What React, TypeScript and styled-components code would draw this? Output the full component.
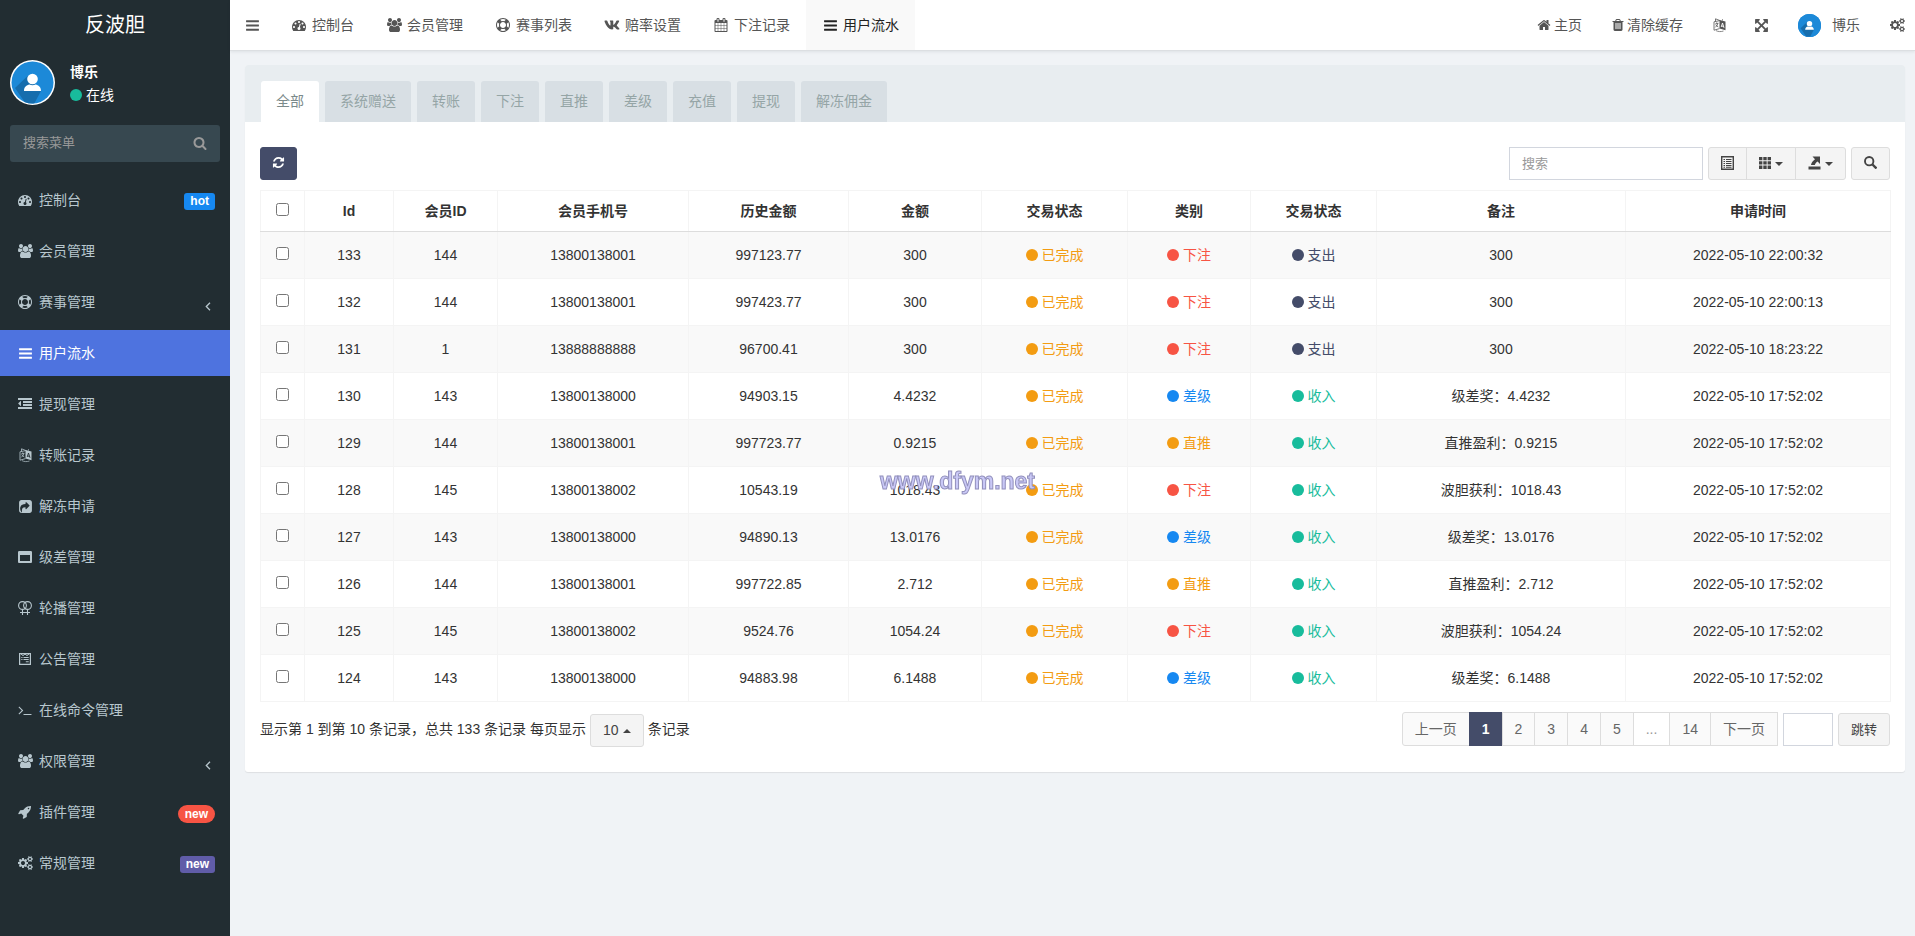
import React from "react";
import styled, { createGlobalStyle, css } from "styled-components";
import { FaVk } from "react-icons/fa";

const Global = createGlobalStyle`
  *, *::before, *::after { box-sizing: border-box; }
  body {
    margin: 0;
    background: #f0f3f6;
    color: #333;
    font: 14px/20px "Liberation Sans", "Noto Sans CJK SC", sans-serif;
  }
  button, input { font-family: inherit; }
  a { color: inherit; text-decoration: none; }
  ul { margin: 0; padding: 0; list-style: none; }
`;

/* ---------- icons ---------- */

const cogSmall =
  "v140q0 16-149 31-12 27-30 52 51 113 51 138 0 4-4 7-122 71-124 71-8 0-46-47t-52-68q-20 2-30 2t-30-2q-14 21-52 68t-46 47q-2 0-124-71-4-3-4-7 0-25 51-138-18-25-30-52-149-15-149-31v-140q0-16 149-31 13-29 30-52-51-113-51-138 0-4 4-7 4-2 35-20t59-34 30-16q8 0 46 46.5t52 67.5q20-2 30-2t30 2q51-71 92-112l6-2q4 0 124 70 4 3 4 7 0 25-51 138 17 23 30 52 149 15 149 31z";
const bar = "v128q0 26-19 45t-45 19h-1408q-26 0-45-19t-19-45v-128q0-26 19-45t45-19h1408q26 0 45 19t19 45z";
const longBar = "v192q0 13-9.5 22.5t-22.5 9.5h-1728q-13 0-22.5-9.5t-9.5-22.5v-192q0-13 9.5-22.5t22.5-9.5h1728q13 0 22.5 9.5t9.5 22.5z";
const shortBar = "v192q0 13-9.5 22.5t-22.5 9.5h-1088q-13 0-22.5-9.5t-9.5-22.5v-192q0-13 9.5-22.5t22.5-9.5h1088q13 0 22.5 9.5t9.5 22.5z";

const glyphs = {
  dashboard:
    "M384 1152q0-53-37.5-90.5t-90.5-37.5-90.5 37.5-37.5 90.5 37.5 90.5 90.5 37.5 90.5-37.5 37.5-90.5zm192-448q0-53-37.5-90.5t-90.5-37.5-90.5 37.5-37.5 90.5 37.5 90.5 90.5 37.5 90.5-37.5 37.5-90.5zm428 481l101-382q6-26-7.5-48.5t-38.5-29.5-48 6.5-30 39.5l-101 382q-60 5-107 43.5t-63 98.5q-20 77 20 146t117 89 146-20 89-117q16-60-6-117t-72-91zm660-33q0-53-37.5-90.5t-90.5-37.5-90.5 37.5-37.5 90.5 37.5 90.5 90.5 37.5 90.5-37.5 37.5-90.5zm-640-640q0-53-37.5-90.5t-90.5-37.5-90.5 37.5-37.5 90.5 37.5 90.5 90.5 37.5 90.5-37.5 37.5-90.5zm448 192q0-53-37.5-90.5t-90.5-37.5-90.5 37.5-37.5 90.5 37.5 90.5 90.5 37.5 90.5-37.5 37.5-90.5zm320 448q0 261-141 483-19 29-54 29h-1402q-35 0-54-29-141-221-141-483 0-182 71-348t191-286 286-191 348-71 348 71 286 191 191 286 71 348z",
  users:
    "M529 896q-162 5-265 128h-134q-82 0-138-40.5t-56-118.5q0-353 124-353 6 0 43.5 21t97.5 42.5 119 21.5q67 0 133-23-5 37-5 66 0 139 81 256zm1071 637q0 120-73 189.5t-194 69.5h-874q-121 0-194-69.5t-73-189.5q0-53 3.5-103.5t14-109 26.5-108.5 43-97.5 62-81 85.5-53.5 111.5-20q10 0 43 21.5t73 48 107 48 135 21.5 135-21.5 107-48 73-48 43-21.5q61 0 111.5 20t85.5 53.5 62 81 43 97.5 26.5 108.5 14 109 3.5 103.5zm-1024-1277q0 106-75 181t-181 75-181-75-75-181 75-181 181-75 181 75 75 181zm704 384q0 159-112.5 271.5t-271.5 112.5-271.5-112.5-112.5-271.5 112.5-271.5 271.5-112.5 271.5 112.5 112.5 271.5zm576 225q0 78-56 118.5t-138 40.5h-134q-103-123-265-128 81-117 81-256 0-29-5-66 66 23 133 23 59 0 119-21.5t97.5-42.5 43.5-21q124 0 124 353zm-128-609q0 106-75 181t-181 75-181-75-75-181 75-181 181-75 181 75 75 181z",
  ring:
    "M896 0q182 0 348 71t286 191 191 286 71 348-71 348-191 286-286 191-348 71-348-71-286-191-191-286-71-348 71-348 191-286 286-191 348-71zm0 128q-190 0-361 90l194 194q82-28 167-28t167 28l194-194q-171-90-361-90zm-678 1129l194-194q-28-82-28-167t28-167l-194-194q-90 171-90 361t90 361zm678 407q190 0 361-90l-194-194q-82 28-167 28t-167-28l-194 194q171 90 361 90zm0-384q159 0 271.5-112.5t112.5-271.5-112.5-271.5-271.5-112.5-271.5 112.5-112.5 271.5 112.5 271.5 271.5 112.5zm484-217l194 194q90-171 90-361t-90-361l-194 194q28 82 28 167t-28 167z",
  bars: `M1664 1344${bar}M1664 832${bar}M1664 320${bar}`,
  calendar:
    "M192 1664h288v-288h-288v288zm352 0h320v-288h-320v288zm-352-352h288v-320h-288v320zm352 0h320v-320h-320v320zm-352-384h288v-288h-288v288zm736 736h320v-288h-320v288zm-384-736h320v-288h-320v288zm768 736h288v-288h-288v288zm-384-352h320v-320h-320v320zm-352-864v-288q0-13-9.5-22.5t-22.5-9.5h-64q-13 0-22.5 9.5t-9.5 22.5v288q0 13 9.5 22.5t22.5 9.5h64q13 0 22.5-9.5t9.5-22.5zm736 864h288v-320h-288v320zm-384-384h320v-288h-320v288zm384 0h288v-288h-288v288zm32-480v-288q0-13-9.5-22.5t-22.5-9.5h-64q-13 0-22.5 9.5t-9.5 22.5v288q0 13 9.5 22.5t22.5 9.5h64q13 0 22.5-9.5t9.5-22.5zm384-64v1280q0 52-38 90t-90 38h-1408q-52 0-90-38t-38-90v-1280q0-52 38-90t90-38h128v-96q0-66 47-113t113-47h64q66 0 113 47t47 113v96h384v-96q0-66 47-113t113-47h64q66 0 113 47t47 113v96h128q52 0 90 38t38 90z",
  search:
    "M1216 832q0-185-131.5-316.5t-316.5-131.5-316.5 131.5-131.5 316.5 131.5 316.5 316.5 131.5 316.5-131.5 131.5-316.5zm512 832q0 52-38 90t-90 38q-54 0-90-38l-343-342q-179 124-399 124-143 0-273.5-55.5t-225-150-150-225-55.5-273.5 55.5-273.5 150-225 225-150 273.5-55.5 273.5 55.5 225 150 150 225 55.5 273.5q0 220-124 399l343 343q37 37 37 90z",
  home:
    "M1472 992v480q0 26-19 45t-45 19h-384v-384h-256v384h-384q-26 0-45-19t-19-45v-480q0-1 .5-3t.5-3l575-474 575 474q1 2 1 6zm223-69l-62 74q-8 9-21 11h-3q-13 0-21-7l-692-577-692 577q-12 8-24 7-13-2-21-11l-62-74q-8-10-7-23.5t11-21.5l719-599q32-26 76-26t76 26l244 204v-195q0-14 9-23t23-9h192q14 0 23 9t9 23v408l219 182q10 8 11 21.5t-7 23.5z",
  trash:
    "M704 1376v-704q0-14-9-23t-23-9h-64q-14 0-23 9t-9 23v704q0 14 9 23t23 9h64q14 0 23-9t9-23zm256 0v-704q0-14-9-23t-23-9h-64q-14 0-23 9t-9 23v704q0 14 9 23t23 9h64q14 0 23-9t9-23zm256 0v-704q0-14-9-23t-23-9h-64q-14 0-23 9t-9 23v704q0 14 9 23t23 9h64q14 0 23-9t9-23zm-544-992h448l-48-117q-7-9-17-11h-317q-10 2-17 11zm928 32v64q0 14-9 23t-23 9h-96v948q0 83-47 143.5t-113 60.5h-832q-66 0-113-58.5t-47-141.5v-952h-96q-14 0-23-9t-9-23v-64q0-14 9-23t23-9h309l70-167q15-37 54-63t79-26h320q40 0 79 26t54 63l70 167h309q14 0 23 9t9 23z",
  cogs: `M896 896q0-106-75-181t-181-75-181 75-75 181 75 181 181 75 181-75 75-181zm768 512q0-52-38-90t-90-38-90 38-38 90q0 53 37.5 90.5t90.5 37.5 90.5-37.5 37.5-90.5zm0-1024q0-52-38-90t-90-38-90 38-38 90q0 53 37.5 90.5t90.5 37.5 90.5-37.5 37.5-90.5zm-384 421v185q0 10-7 19.5t-16 10.5l-155 24q-11 35-32 76 34 48 90 115 7 11 7 20 0 12-7 19-23 30-82.5 89.5t-78.5 59.5q-11 0-21-7l-115-90q-37 19-77 31-11 108-23 155-7 24-30 24h-186q-11 0-20-7.5t-10-17.5l-23-153q-34-10-75-31l-118 89q-7 7-20 7-11 0-21-8-144-133-144-160 0-9 7-19 10-14 41-53t47-61q-23-44-35-82l-152-24q-10-1-17-9.5t-7-19.5v-185q0-10 7-19.5t16-10.5l155-24q11-35 32-76-34-48-90-115-7-11-7-20 0-12 7-20 22-30 82-89t79-59q11 0 21 7l115 90q34-18 77-32 11-108 23-154 7-24 30-24h186q11 0 20 7.5t10 17.5l23 153q34 10 75 31l118-89q8-7 20-7 11 0 21 8 144 133 144 160 0 8-7 19-12 16-42 54t-45 60q23 48 34 82l152 23q10 2 17 10.5t7 19.5zM1920 1338${cogSmall}M1920 314${cogSmall}`,
  refresh:
    "M1639 1056q0 5-1 7-64 268-268 434.5t-478 166.5q-146 0-282.5-55t-243.5-157l-129 129q-19 19-45 19t-45-19-19-45v-448q0-26 19-45t45-19h448q26 0 45 19t19 45-19 45l-137 137q71 66 161 102t187 36q134 0 250-65t186-179q11-17 53-117 8-23 30-23h192q13 0 22.5 9.5t9.5 22.5zm25-800v448q0 26-19 45t-45 19h-448q-26 0-45-19t-19-45 19-45l138-138q-148-137-349-137-134 0-250 65t-186 179q-11 17-53 117-8 23-30 23h-199q-13 0-22.5-9.5t-9.5-22.5v-7q65-268 270-434.5t480-166.5q146 0 284 55.5t245 156.5l130-129q19-19 45-19t45 19 19 45z",
  rocket:
    "M1440 448q0-40-28-68t-68-28-68 28-28 68 28 68 68 28 68-28 28-68zm224-288q0 249-75.5 430.5t-253.5 360.5q-81 80-195 176l-20 379q-2 16-16 26l-384 224q-7 4-16 4-12 0-23-9l-64-64q-13-14-8-32l85-276-281-281-276 85q-3 1-9 1-14 0-23-9l-64-64q-17-19-5-39l224-384q10-14 26-16l379-20q96-114 176-195 188-187 358-258t431-71q14 0 24 9.5t10 22.5z",
  outdent: `M384 544v576q0 13-9.5 22.5t-22.5 9.5q-14 0-23-9l-288-288q-9-9-9-23t9-23l288-288q9-9 23-9 13 0 22.5 9.5t9.5 22.5zM1792 1312${longBar}M1792 928${shortBar}M1792 544${shortBar}M1792 160${longBar}`,
  share:
    "M1005 1197l352-352q19-19 19-45t-19-45l-352-352q-30-31-69-14-40 17-40 59v160q-119 0-216 19.5t-162.5 51-114 79-76.5 95.5-44.5 109-21.5 111.5-5 110.5q0 181 167 404 11 12 25 12 7 0 13-3 22-9 19-33-44-354 62-473 46-52 130-75.5t224-23.5v160q0 42 40 59 12 5 24 5 26 0 45-19zm659-781v960q0 119-84.5 203.5t-203.5 84.5h-960q-119 0-203.5-84.5t-84.5-203.5v-960q0-119 84.5-203.5t203.5-84.5h960q119 0 203.5 84.5t84.5 203.5z",
  window:
    "M256 1408h1280v-768h-1280v768zM1792 288v1216q0 66-47 113t-113 47h-1472q-66 0-113-47t-47-113v-1216q0-66 47-113t113-47h1472q66 0 113 47t47 113z",
  terminal:
    "M649 983l-466 466q-10 10-23 10t-23-10l-50-50q-10-10-10-23t10-23l393-393-393-393q-10-10-10-23t10-23l50-50q10-10 23-10t23 10l466 466q10 10 10 23t-10 23zm1079 457v64q0 14-9 23t-23 9h-960q-14 0-23-9t-9-23v-64q0-14 9-23t23-9h960q14 0 23 9t9 23z",
  expand:
    "M1411 541l-355 355 355 355 144-144q29-31 70-14 39 17 39 59v448q0 26-19 45t-45 19h-448q-42 0-59-40-17-39 14-69l144-144-355-355-355 355 144 144q31 30 14 69-17 40-59 40h-448q-26 0-45-19t-19-45v-448q0-42 40-59 39-17 69 14l144 144 355-355-355-355-144 144q-19 19-45 19-12 0-24-5-40-17-40-59v-448q0-26 19-45t45-19h448q42 0 59 40 17 39-14 69l-144 144 355 355 355-355-144-144q-31-30-14-69 17-40 59-40h448q26 0 45 19t19 45v448q0 42-39 59-13 5-25 5-26 0-45-19z",
};

const IconBox = styled.span<{ $w?: number }>`
  display: inline-flex;
  flex: none;
  align-items: center;
  justify-content: center;
  width: ${(p) => p.$w ?? 18}px;
  height: 14px;
  svg { display: block; flex: none; overflow: visible; }
`;

type GlyphName = keyof typeof glyphs;
const wide: Partial<Record<GlyphName, string>> = {
  users: "-64 0 1920 1792",
  cogs: "0 0 1920 1792",
};

function Glyph({ name, size = 14 }: { name: GlyphName; size?: number }) {
  const w = wide[name] ? size + 1 : size;
  return (
    <svg width={w} height={size} viewBox={wide[name] ?? "0 0 1792 1792"} fill="currentColor" fillRule={name === "window" ? "evenodd" : "nonzero"} aria-hidden="true">
      <path d={glyphs[name]} />
    </svg>
  );
}

function LanguageIcon() {
  return (
    <svg width="13" height="14" viewBox="0 0 13 14" fill="none" stroke="currentColor" aria-hidden="true">
      <path d="M6.500 2.700 1 3.800v8.400l5.500-1.600M2.500 3.400V.8l5 2" strokeWidth=".8" />
      <path d="M2.200 6l3.200-.8M3.700 4.400v1.200M4.900 5.400C4.400 7.200 3.500 8.500 2.200 9.400M2.800 6.800c.6 1 1.400 1.700 2.500 2.100" strokeWidth=".8" />
      <path d="M6.500 2 12.500 3.600v8.600l-6-1.700z" fill="currentColor" stroke="none" />
      <path d="M8.200 9 9.500 5l1.500 4.800M8.700 8l1.900.4" stroke="var(--icon-gap)" strokeWidth=".9" />
      <path d="M3 12.600c2 1.200 5 1.300 7.500.4M9.500 1.200v1.400" strokeWidth=".7" />
    </svg>
  );
}

function VenusIcon() {
  return (
    <svg width="14" height="14" viewBox="0 0 14 14" fill="none" stroke="currentColor" strokeWidth="1.100" aria-hidden="true">
      <circle cx="4.500" cy="4.500" r="3.900" />
      <circle cx="9.500" cy="4.500" r="3.900" />
      <path d="M4.500 8.400V14M9.500 8.400V14M2 11.500h10" />
    </svg>
  );
}

function NoticeIcon() {
  return (
    <svg width="12" height="12" viewBox="0 0 12 12" fill="none" stroke="currentColor" aria-hidden="true">
      <path d="M.6.6h10.800v10.800H.6z" strokeWidth="1.200" />
      <path d="M2 1l2 1.600L6 1l2 1.600L10 1" />
      <path d="M2.300 4.500h1.200M4.500 4.500h5.200M2.300 6.500h1.200M4.500 6.500h5.200M6.800 8.700h2.900" strokeWidth="1.100" />
    </svg>
  );
}

function Avatar({ size, ring }: { size: number; ring?: boolean }) {
  return (
    <svg width={size} height={size} viewBox="0 0 45 45" role="img" aria-label="博乐">
      <defs>
        <clipPath id={`disc${size}`}><circle cx="22.500" cy="22.500" r={ring ? 21 : 22.5} /></clipPath>
      </defs>
      <circle cx="22.500" cy="22.500" r="22.500" fill={ring ? "#fff" : "#1c89d8"} />
      <g clipPath={`url(#disc${size})`}>
        <rect width="45" height="45" fill="#1c89d8" />
        <path d="M17.500 16 5 28 16 44h8l7-13z" fill="#166dad" />
      </g>
      <circle cx="22.500" cy="19" r="5.300" fill="#fff" />
      <path d="M14 31c0-4 2.500-6 5.500-6.500 2 1 4 1 6 0 3 .5 5.500 2.500 5.500 6.500z" fill="#fff" />
    </svg>
  );
}

/* ---------- sidebar ---------- */

const Shell = styled.div`
  display: flex;
  min-height: 100vh;
`;
const Sidebar = styled.aside`
  --icon-gap: #222d32;
  flex: none;
  width: 230px;
  background: #222d32;
  color: #b8c7ce;
`;
const Brand = styled.a`
  display: block;
  height: 50px;
  line-height: 50px;
  text-align: center;
  font-size: 20px;
  color: #fff;
`;
const UserPanel = styled.div`
  display: flex;
  gap: 15px;
  padding: 10px;
  color: #fff;
`;
const UserInfo = styled.div`
  display: flex;
  flex-direction: column;
  gap: 3px;
  padding-top: 2px;
  strong { line-height: 20px; }
`;
const Dot = styled.i<{ $color?: string }>`
  flex: none;
  width: 12px;
  height: 12px;
  border-radius: 50%;
  background: ${(p) => p.$color ?? "currentColor"};
`;
const Online = styled.a`
  display: flex;
  align-items: center;
  gap: 4px;
`;
const MenuSearch = styled.form`
  display: flex;
  align-items: center;
  height: 37px;
  margin: 10px 10px 15px;
  padding-bottom: 2px;
  border-radius: 3px;
  background: #374850;
  input {
    flex: 1;
    min-width: 0;
    padding: 0 13px;
    border: 0;
    background: none;
    color: #fff;
    font-size: 13px;
    outline: none;
  }
  input::placeholder { color: #999; }
  button {
    display: flex;
    padding: 0 13px;
    border: 0;
    background: none;
    color: #999;
  }
`;
const Menu = styled.ul`
  display: flex;
  flex-direction: column;
  gap: 5px;
`;
const MenuLink = styled.a<{ $active?: boolean }>`
  display: flex;
  align-items: center;
  gap: 5px;
  height: 46px;
  padding: 0 15px 0 16px;
  ${(p) => p.$active && css`
    background: #4e73df;
    color: #fff;
  `}
`;
const Badge = styled.small<{ $color: string; $pill?: boolean }>`
  margin: ${(p) => (p.$pill ? 4 : 2)}px 0 0 auto;
  padding: 0 ${(p) => (p.$pill ? 7 : 6)}px;
  border-radius: ${(p) => (p.$pill ? 9 : 3)}px;
  background: ${(p) => p.$color};
  color: #fff;
  font-size: 12px;
  font-weight: bold;
  line-height: ${(p) => (p.$pill ? 18 : 17)}px;
`;
const Chevron = styled.svg`
  margin: 8px 4px 0 auto;
`;

/* ---------- top bar ---------- */

const Main = styled.div`
  flex: 1;
  min-width: 0;
`;
const TopBar = styled.header`
  --icon-gap: #fff;
  display: flex;
  justify-content: space-between;
  height: 51px;
  padding-right: 10px;
  border-bottom: 1px solid #dcdfe2;
  background: #fff;
  box-shadow: 0 1px 3px rgba(0, 21, 41, 0.08);
  color: #555;
`;
const NavGroup = styled.nav`
  display: flex;
`;
const Toggle = styled.button`
  display: flex;
  align-items: center;
  justify-content: center;
  width: 45px;
  padding: 0;
  border: 0;
  background: none;
  color: inherit;
`;
const NavTab = styled.a<{ $active?: boolean }>`
  display: flex;
  align-items: center;
  gap: 4px;
  padding: 0 16px 0 15px;
  line-height: 50px;
  ${(p) => p.$active && css`
    background: #f9f9f9;
    color: #222;
  `}
`;
const NavLink = styled.a<{ $gap?: number }>`
  display: flex;
  align-items: center;
  gap: ${(p) => p.$gap ?? 3}px;
  padding: 0 15px;
  &:last-child { padding-right: 0; }
`;

/* ---------- panel ---------- */

const Panel = styled.section`
  margin: 14px 10px 15px 15px;
  border-radius: 3px;
  background: #fff;
  box-shadow: 0 1px 1px rgba(0, 0, 0, 0.08);
`;
const Tabs = styled.nav`
  display: flex;
  gap: 6px;
  padding: 16px 16px 0;
  border-radius: 3px 3px 0 0;
  background: #e8edf0;
`;
const Tab = styled.a<{ $active?: boolean }>`
  height: 41px;
  padding: 0 15px;
  border-radius: 3px 3px 0 0;
  background: ${(p) => (p.$active ? "#fff" : "#d8dfe4")};
  color: ${(p) => (p.$active ? "#7b8a8b" : "#95a5a6")};
  line-height: 41px;
`;
const Body = styled.div`
  padding: 25px 15px;
`;
const Toolbar = styled.div`
  display: flex;
  justify-content: space-between;
  margin-bottom: 10px;
`;
const Tools = styled.div`
  display: flex;
  gap: 5px;
`;
const Button = styled.button`
  display: inline-flex;
  align-items: center;
  justify-content: center;
  gap: 4px;
  height: 33px;
  padding: 0 12px 2px;
  border: 1px solid #ddd;
  border-radius: 3px;
  background: #f4f4f4;
  color: #444;
  font-size: 13px;
`;
const Refresh = styled(Button)`
  padding: 0 11px 2px;
  border-color: #444c69;
  background: #444c69;
  color: #fff;
`;
const ButtonGroup = styled.div`
  display: flex;
  button { border-radius: 0; }
  button + button { margin-left: -1px; }
  button:first-child { border-radius: 3px 0 0 3px; }
  button:last-child { border-radius: 0 3px 3px 0; }
`;
const TextInput = styled.input<{ $w: number }>`
  width: ${(p) => p.$w}px;
  height: 33px;
  padding: 0 12px;
  border: 1px solid #d2d6de;
  background: #fff;
  font-size: 13px;
  outline: none;
  &::placeholder { color: #999; }
`;
const Caret = styled.i<{ $up?: boolean }>`
  margin-top: 3px;
  border: 4px solid transparent;
  ${(p) => (p.$up
    ? css`border-top: 0; border-bottom-color: currentColor;`
    : css`border-bottom: 0; border-top-color: currentColor;`)}
`;
const Table = styled.table`
  width: 100%;
  table-layout: fixed;
  border-collapse: collapse;
  text-align: center;
  th, td {
    padding: 0 8px;
    border: 1px solid #f4f4f4;
  }
  th {
    height: 41px;
    border-bottom: 1px solid #ddd;
  }
  td { height: 47px; }
  tbody tr:nth-child(odd) { background: #f9f9f9; }
  input {
    display: block;
    width: 13px;
    height: 13px;
    margin: 0 auto 3px;
  }
`;
const Status = styled.a<{ $color: string }>`
  display: inline-flex;
  align-items: center;
  gap: 4px;
  color: ${(p) => p.$color};
`;
const Footer = styled.footer`
  display: flex;
  align-items: flex-start;
  justify-content: space-between;
  padding-top: 10px;
`;
const Summary = styled.div`
  display: flex;
  align-items: flex-start;
  gap: 4px;
  padding-top: 2px;
  line-height: 30px;
  button { font-size: 14px; }
`;
const Pager = styled.div`
  display: flex;
  align-items: center;
  gap: 5px;
`;
const Pages = styled.ul`
  display: flex;
  li + li { margin-left: -1px; }
  li:first-child a { border-radius: 3px 0 0 3px; }
`;
const PageLink = styled.a<{ $active?: boolean; $muted?: boolean }>`
  display: block;
  height: 34px;
  padding: 0 12px;
  border: 1px solid ${(p) => (p.$active ? "#444c69" : "#ddd")};
  background: ${(p) => (p.$active ? "#444c69" : p.$muted ? "#fff" : "#fafafa")};
  color: ${(p) => (p.$active ? "#fff" : p.$muted ? "#999" : "#666")};
  font-weight: ${(p) => (p.$active ? "bold" : "normal")};
  line-height: 32px;
`;
const Watermark = styled.div`
  position: fixed;
  top: 50%;
  left: 50%;
  padding-top: 26px;
  transform: translate(-50%, -50%);
  pointer-events: none;
  color: #c9c8f6;
  font-size: 23px;
  font-weight: bold;
  line-height: 26px;
  -webkit-text-stroke: 1px #9391bd;
`;

/* ---------- data ---------- */

const menu: { icon: React.ReactNode; label: string; active?: boolean; sub?: boolean; badge?: [string, string, boolean?] }[] = [
  { icon: <Glyph name="dashboard" />, label: "控制台", badge: ["hot", "#1688f1"] },
  { icon: <Glyph name="users" />, label: "会员管理" },
  { icon: <Glyph name="ring" />, label: "赛事管理", sub: true },
  { icon: <Glyph name="bars" size={15} />, label: "用户流水", active: true },
  { icon: <Glyph name="outdent" />, label: "提现管理" },
  { icon: <LanguageIcon />, label: "转账记录" },
  { icon: <Glyph name="share" size={15} />, label: "解冻申请" },
  { icon: <Glyph name="window" />, label: "级差管理" },
  { icon: <VenusIcon />, label: "轮播管理" },
  { icon: <NoticeIcon />, label: "公告管理" },
  { icon: <Glyph name="terminal" />, label: "在线命令管理" },
  { icon: <Glyph name="users" />, label: "权限管理", sub: true },
  { icon: <Glyph name="rocket" />, label: "插件管理", badge: ["new", "#f75444", true] },
  { icon: <Glyph name="cogs" />, label: "常规管理", badge: ["new", "#605ca8"] },
];

const navTabs: [React.ReactNode, string][] = [
  [<Glyph name="dashboard" />, "控制台"],
  [<Glyph name="users" />, "会员管理"],
  [<Glyph name="ring" />, "赛事列表"],
  [<FaVk size={16} />, "赔率设置"],
  [<Glyph name="calendar" />, "下注记录"],
  [<Glyph name="bars" size={15} />, "用户流水"],
];

const tabs = ["全部", "系统赠送", "转账", "下注", "直推", "差级", "充值", "提现", "解冻佣金"];
const columns: [string, number][] = [
  ["Id", 89], ["会员ID", 104], ["会员手机号", 191], ["历史金额", 160], ["金额", 133],
  ["交易状态", 146], ["类别", 123], ["交易状态", 126], ["备注", 249], ["申请时间", 265],
];

const colors: Record<string, string> = {
  已完成: "#f39c12", 下注: "#f75444", 差级: "#1688f1", 直推: "#f39c12", 支出: "#444c69", 收入: "#18bc9c",
};

const rows = [
  ["133", "144", "13800138001", "997123.77", "300", "下注", "支出", "300", "22:00:32"],
  ["132", "144", "13800138001", "997423.77", "300", "下注", "支出", "300", "22:00:13"],
  ["131", "1", "13888888888", "96700.41", "300", "下注", "支出", "300", "18:23:22"],
  ["130", "143", "13800138000", "94903.15", "4.4232", "差级", "收入", "级差奖：4.4232", "17:52:02"],
  ["129", "144", "13800138001", "997723.77", "0.9215", "直推", "收入", "直推盈利：0.9215", "17:52:02"],
  ["128", "145", "13800138002", "10543.19", "1018.43", "下注", "收入", "波胆获利：1018.43", "17:52:02"],
  ["127", "143", "13800138000", "94890.13", "13.0176", "差级", "收入", "级差奖：13.0176", "17:52:02"],
  ["126", "144", "13800138001", "997722.85", "2.712", "直推", "收入", "直推盈利：2.712", "17:52:02"],
  ["125", "145", "13800138002", "9524.76", "1054.24", "下注", "收入", "波胆获利：1054.24", "17:52:02"],
  ["124", "143", "13800138000", "94883.98", "6.1488", "差级", "收入", "级差奖：6.1488", "17:52:02"],
];

const pages = ["上一页", "1", "2", "3", "4", "5", "...", "14", "下一页"];

function StatusLink({ label }: { label: string }) {
  return (
    <Status href="#" $color={colors[label]}>
      <Dot />
      {label}
    </Status>
  );
}

export default function App() {
  return (
    <>
      <Global />
      <Shell>
        <Sidebar>
          <Brand href="#">反波胆</Brand>
          <UserPanel>
            <Avatar size={45} ring />
            <UserInfo>
              <strong>博乐</strong>
              <Online href="#"><Dot $color="#18bc9c" />在线</Online>
            </UserInfo>
          </UserPanel>
          <MenuSearch>
            <input type="text" placeholder="搜索菜单" aria-label="搜索菜单" />
            <button type="button" aria-label="搜索"><Glyph name="search" /></button>
          </MenuSearch>
          <Menu>
            {menu.map((m) => (
              <li key={m.label}>
                <MenuLink href="#" $active={m.active}>
                  <IconBox>{m.icon}</IconBox>
                  {m.label}
                  {m.sub && (
                    <Chevron width="6" height="9" viewBox="0 0 6 9" fill="none" stroke="currentColor" strokeWidth="1.3">
                      <path d="M5 .8 1.300 4.500 5 8.200" />
                    </Chevron>
                  )}
                  {m.badge && <Badge $color={m.badge[1]} $pill={m.badge[2]}>{m.badge[0]}</Badge>}
                </MenuLink>
              </li>
            ))}
          </Menu>
        </Sidebar>
        <Main>
          <TopBar>
            <NavGroup>
              <Toggle type="button" aria-label="切换菜单"><Glyph name="bars" size={15} /></Toggle>
              {navTabs.map(([icon, label], i) => (
                <NavTab key={label} href="#" $active={i === 5}>
                  <IconBox>{icon}</IconBox>
                  {label}
                </NavTab>
              ))}
            </NavGroup>
            <NavGroup>
              <NavLink href="#"><Glyph name="home" />主页</NavLink>
              <NavLink href="#"><IconBox $w={12}><Glyph name="trash" /></IconBox>清除缓存</NavLink>
              <NavLink href="#" aria-label="语言"><IconBox $w={12}><LanguageIcon /></IconBox></NavLink>
              <NavLink href="#" aria-label="全屏"><IconBox $w={13}><Glyph name="expand" size={15} /></IconBox></NavLink>
              <NavLink href="#" $gap={11}><Avatar size={23} />博乐</NavLink>
              <NavLink href="#" aria-label="设置"><Glyph name="cogs" /></NavLink>
            </NavGroup>
          </TopBar>
          <Panel>
            <Tabs>
              {tabs.map((t, i) => <Tab key={t} href="#" $active={i === 0}>{t}</Tab>)}
            </Tabs>
            <Body>
              <Toolbar>
                <Refresh type="button" aria-label="刷新"><Glyph name="refresh" size={13} /></Refresh>
                <Tools>
                  <TextInput $w={194} type="text" placeholder="搜索" aria-label="搜索" />
                  <ButtonGroup>
                    <Button type="button" aria-label="切换视图">
                      <svg width="13" height="14" viewBox="0 0 13 14" fill="none" stroke="currentColor">
                        <path d="M.7.7h11.600v12.600H.7z" strokeWidth="1.400" />
                        <path d="M2.500 3.500h1.500M5 3.500h5.500M2.500 5.500h1.500M5 5.500h5.500M2.500 7.500h1.500M5 7.500h5.500M2.500 9.500h1.500M5 9.500h5.500M2.500 11.300h1.500M5 11.300h5.500" strokeWidth="1.100" />
                      </svg>
                    </Button>
                    <Button type="button" aria-label="选择列">
                      <svg width="12" height="12" viewBox="0 0 12 12" fill="currentColor">
                        <path d="M0 0h3.400v3.300H0zM4.300 0h3.400v3.300H4.300zM8.600 0H12v3.300H8.600zM0 4.300h3.400v3.300H0zM4.300 4.300h3.400v3.300H4.300zM8.600 4.300H12v3.300H8.600zM0 8.600h3.400V12H0zM4.300 8.600h3.400V12H4.300zM8.600 8.600H12V12H8.600z" />
                      </svg>
                      <Caret />
                    </Button>
                    <Button type="button" aria-label="导出数据">
                      <svg width="13" height="14" viewBox="0 0 13 14" fill="currentColor">
                        <path d="M.5 10.500h12V13.500H.5zM4.500.5h7.500V8L9.600 5.600C8.500 6.200 7.500 7.400 6.800 9H3c.4-2.400 2-4.400 4-5.800z" />
                      </svg>
                      <Caret />
                    </Button>
                  </ButtonGroup>
                  <Button type="button" aria-label="搜索">
                    <svg width="13" height="13" viewBox="0 0 13 13" fill="none" stroke="currentColor">
                      <circle cx="5.200" cy="5.200" r="4.200" strokeWidth="1.900" />
                      <path d="m8.500 8.500 4 4" strokeWidth="2.400" />
                    </svg>
                  </Button>
                </Tools>
              </Toolbar>
              <Table>
                <colgroup>
                  <col width={44} />
                  {columns.map(([, w], i) => <col key={i} width={w} />)}
                </colgroup>
                <thead>
                  <tr>
                    <th><input type="checkbox" aria-label="全选" /></th>
                    {columns.map(([c], i) => <th key={i}>{c}</th>)}
                  </tr>
                </thead>
                <tbody>
                  {rows.map(([id, uid, phone, before, amount, kind, flow, note, time]) => (
                    <tr key={id}>
                      <td><input type="checkbox" aria-label={id} /></td>
                      <td>{id}</td>
                      <td>{uid}</td>
                      <td>{phone}</td>
                      <td>{before}</td>
                      <td>{amount}</td>
                      <td><StatusLink label="已完成" /></td>
                      <td><StatusLink label={kind} /></td>
                      <td><StatusLink label={flow} /></td>
                      <td>{note}</td>
                      <td>2022-05-10 {time}</td>
                    </tr>
                  ))}
                </tbody>
              </Table>
              <Footer>
                <Summary>
                  <span>显示第 1 到第 10 条记录，总共 133 条记录</span>
                  <span>每页显示</span>
                  <Button type="button">10 <Caret $up /></Button>
                  <span>条记录</span>
                </Summary>
                <Pager>
                  <Pages>
                    {pages.map((p) => (
                      <li key={p}><PageLink href="#" $active={p === "1"} $muted={p === "..."}>{p}</PageLink></li>
                    ))}
                  </Pages>
                  <TextInput $w={50} type="text" aria-label="页码" />
                  <Button type="button">跳转</Button>
                </Pager>
              </Footer>
            </Body>
          </Panel>
        </Main>
      </Shell>
      <Watermark>www.dfym.net</Watermark>
    </>
  );
}
